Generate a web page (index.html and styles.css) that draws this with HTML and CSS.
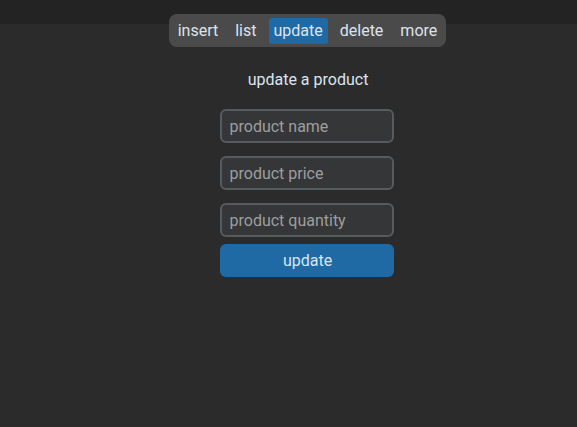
FILE: index.html
```html
<!DOCTYPE html>
<html>
<head>
<meta charset="utf-8">
<link rel="stylesheet" href="styles.css">
</head>
<body>
<div class="page">
  <nav class="tabs">
    <span class="tab">insert</span>
    <span class="tab">list</span>
    <span class="tab active">update</span>
    <span class="tab">delete</span>
    <span class="tab">more</span>
  </nav>
  <h1 class="title">update a product</h1>
  <form class="form">
    <input class="field" type="text" placeholder="product name">
    <input class="field" type="text" placeholder="product price">
    <input class="field" type="text" placeholder="product quantity">
    <button class="btn" type="button">update</button>
  </form>
</div>
</body>
</html>
```

FILE: styles.css
```css
html, body {
  margin: 0;
  padding: 0;
  height: 100%;
}
body {
  background: linear-gradient(#232323 0, #232323 24px, #2b2b2b 24px);
  font-family: Roboto, "Liberation Sans", sans-serif;
  color: #dce4ee;
}
.page {
  display: flex;
  flex-direction: column;
  align-items: center;
  padding-top: 14px;
  padding-left: 36px;
}
.tabs {
  display: flex;
  gap: 7px;
  margin-left: 2px;
  background: #4a4a4a;
  border-radius: 8px;
  padding: 4px 4px 3px 4px;
}
.tab {
  font-size: 16px;
  line-height: 25px;
  padding: 0 5px 1px 5px;
  border-radius: 3px;
  color: #dce4ee;
}
.tab.active {
  background: #1f6aa5;
}
.title {
  margin: 23px 0 0 3px;
  font-size: 16px;
  font-weight: normal;
  line-height: 20px;
  color: #dce4ee;
}
.form {
  display: flex;
  flex-direction: column;
  margin-top: 19px;
  width: 174px;
}
.field {
  box-sizing: border-box;
  width: 174px;
  height: 34px;
  margin: 0 0 13px 0;
  padding: 0 8px;
  background: #343638;
  border: 2px solid #565b5e;
  border-radius: 6px;
  font-family: Roboto, "Liberation Sans", sans-serif;
  font-size: 16px;
  color: #dce4ee;
  outline: none;
}
.field:nth-of-type(3) {
  margin-bottom: 7px;
}
.field::placeholder {
  color: #9e9e9e;
}
.btn {
  box-sizing: border-box;
  width: 174px;
  height: 33px;
  border: none;
  border-radius: 6px;
  background: #1f6aa5;
  color: #dce4ee;
  font-family: Roboto, "Liberation Sans", sans-serif;
  font-size: 16px;
  padding: 0 0 0 2px;
}
```
